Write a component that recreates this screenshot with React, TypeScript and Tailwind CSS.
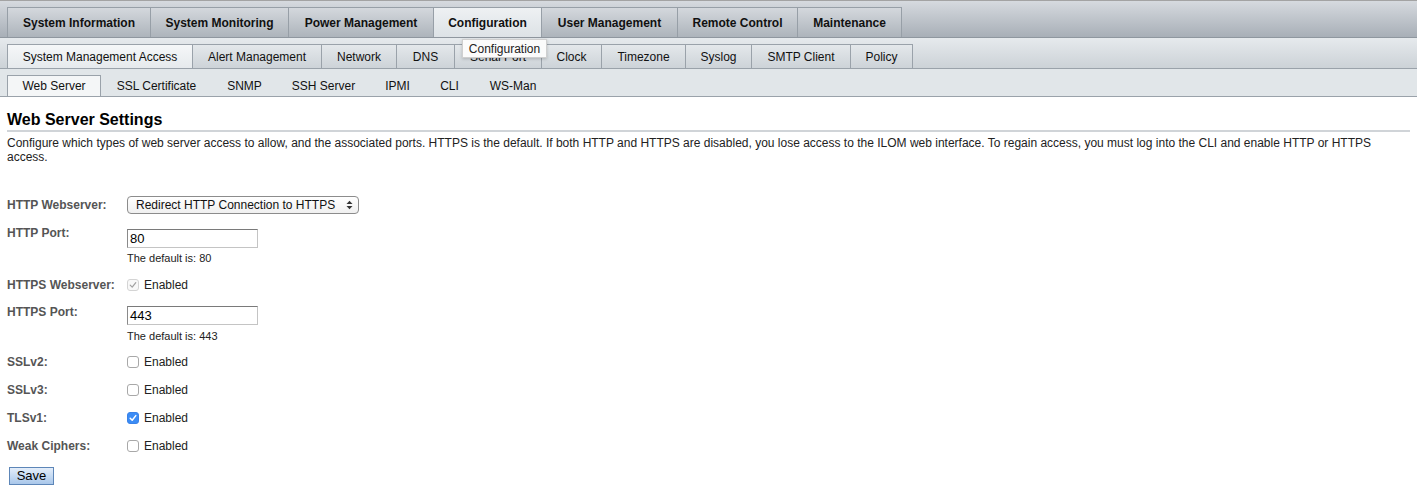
const topTabs = [
  { label: "System Information", w: "w-[144px]" },
  { label: "System Monitoring", w: "w-[138px]" },
  { label: "Power Management", w: "w-[145px]" },
  { label: "Configuration", w: "w-[108px]", active: true },
  { label: "User Management", w: "w-[136px]" },
  { label: "Remote Control", w: "w-[120px]" },
  { label: "Maintenance", w: "w-[104px]" },
];

const subTabs = [
  { label: "System Management Access", w: "w-[186px]", active: true },
  { label: "Alert Management", w: "w-[129px]" },
  { label: "Network", w: "w-[75px]" },
  { label: "DNS", w: "w-[58px]" },
  { label: "Serial Port", w: "w-[87px]" },
  { label: "Clock", w: "w-[60px]" },
  { label: "Timezone", w: "w-[84px]" },
  { label: "Syslog", w: "w-[66px]" },
  { label: "SMTP Client", w: "w-[99px]" },
  { label: "Policy", w: "w-[62px]" },
];

const thirdTabs = [
  { label: "Web Server", w: "w-[94px]", active: true },
  { label: "SSL Certificate", w: "w-[111px]" },
  { label: "SNMP", w: "w-[65px]" },
  { label: "SSH Server", w: "w-[93px]" },
  { label: "IPMI", w: "w-[55px]" },
  { label: "CLI", w: "w-[49px]" },
  { label: "WS-Man", w: "w-[78px]" },
];

function Checkbox({ checked, disabled }: { checked?: boolean; disabled?: boolean }) {
  if (checked && !disabled) {
    return (
      <span className="flex h-[12px] w-[12px] items-center justify-center rounded-[3px] border border-[#3a82e8] bg-[#3b8cf5]">
        <svg width="8" height="8" viewBox="0 0 8 8">
          <path d="M1.2 4.2 L3.2 6.2 L6.8 1.6" fill="none" stroke="white" strokeWidth="1.5" strokeLinecap="round" strokeLinejoin="round" />
        </svg>
      </span>
    );
  }
  return (
    <span
      className={
        disabled
          ? "flex h-[12px] w-[12px] items-center justify-center rounded-[3px] border border-[#d4d4d4] bg-[#f8f8f8]"
          : "flex h-[12px] w-[12px] items-center justify-center rounded-[3px] border border-[#a8a8a8] bg-white"
      }
    >
      {checked && (
        <svg width="8" height="8" viewBox="0 0 8 8">
          <path d="M1.2 4.2 L3.2 6.2 L6.8 1.6" fill="none" stroke="#a0a0a0" strokeWidth="1.2" strokeLinecap="round" strokeLinejoin="round" />
        </svg>
      )}
    </span>
  );
}

function CheckRow({ label, checked, disabled, mt }: { label: string; checked?: boolean; disabled?: boolean; mt: string }) {
  return (
    <div className={`flex h-[14px] items-center ${mt}`}>
      <div className="w-[120px] text-[12px] font-bold text-[#555]">{label}</div>
      <Checkbox checked={checked} disabled={disabled} />
      <span className="ml-[5px] text-[12px] text-[#222]">Enabled</span>
    </div>
  );
}

function PortRow({
  label,
  value,
  hint,
  mt,
  inputMt,
  hintMt,
}: {
  label: string;
  value: string;
  hint: string;
  mt: string;
  inputMt: string;
  hintMt: string;
}) {
  return (
    <div className={`flex ${mt}`}>
      <div className="w-[120px] text-[12px] leading-[14px] font-bold text-[#555]">{label}</div>
      <div className="flex flex-col">
        <div className={`${inputMt} flex h-[19px] w-[131px] items-center border border-t-[#7a7a7a] border-l-[#8a8a8a] border-r-[#c4c4c4] border-b-[#c4c4c4] bg-white px-[2px] text-[13px] text-black`}>
          {value}
        </div>
        <div className={`${hintMt} text-[11px] leading-[13px] text-[#222]`}>{hint}</div>
      </div>
    </div>
  );
}

export default function App() {
  return (
    <div className="relative min-h-[501px] w-full bg-white font-['Liberation_Sans',Arial,sans-serif]">
      {/* main tabs */}
      <div className="flex h-[38px] items-end border-t border-b border-t-[#a3a3a3] border-b-[#8f979f] bg-gradient-to-b from-[#d6dadf] to-[#a8afb7] pl-[7px]">
        {topTabs.map((t, i) => (
          <div
            key={t.label}
            className={`${t.w} ${i === 0 ? "border-l" : ""} flex h-[30px] shrink-0 items-center justify-center border-t border-r border-[#979fa7] text-[12px] font-bold text-[#111] ${
              t.active ? "bg-gradient-to-b from-[#eef1f3] to-[#dde2e6]" : "bg-gradient-to-b from-[#d4d8dd] to-[#adb4bb]"
            }`}
          >
            {t.label}
          </div>
        ))}
      </div>

      {/* second tabs */}
      <div className="flex h-[31px] items-end border-b border-[#9aa2aa] bg-gradient-to-b from-[#e6eaed] to-[#ccd2d7] pl-[7px]">
        {subTabs.map((t, i) => (
          <div
            key={t.label}
            className={`${t.w} ${i === 0 ? "border-l" : ""} flex h-[24px] shrink-0 items-center justify-center border-t border-r border-[#9aa2aa] text-[12px] text-[#111] ${
              t.active ? "bg-gradient-to-b from-[#f5f7f8] to-[#e6eaed]" : "bg-gradient-to-b from-[#e4e8eb] to-[#cdd3d8]"
            }`}
          >
            {t.label}
          </div>
        ))}
      </div>

      {/* third tabs */}
      <div className="flex h-[28px] items-end border-b border-[#9aa2aa] bg-[#e1e6e9] pl-[7px]">
        {thirdTabs.map((t) => (
          <div
            key={t.label}
            className={`${t.w} flex h-[21px] shrink-0 items-center justify-center text-[12px] text-[#111] ${
              t.active ? "border-t border-l border-r border-[#9aa2aa] bg-[#f4f6f7]" : ""
            }`}
          >
            {t.label}
          </div>
        ))}
      </div>

      {/* tooltip */}
      <div className="absolute top-[39px] left-[462px] flex h-[19px] w-[85px] items-center justify-center border border-[#cfcfcf] bg-[#fbfbfb] text-[12px] text-[#222] shadow-[0_1px_3px_rgba(0,0,0,0.2)]">
        Configuration
      </div>

      {/* content */}
      <div className="px-[7px]">
        <h1 className="mt-[13px] border-b-2 border-[#d0d4d8] text-[16px] leading-[20px] font-bold text-black">
          Web Server Settings
        </h1>
        <p className="mt-[4px] text-[12px] leading-[14px] text-[#222]">
          Configure which types of web server access to allow, and the associated ports. HTTPS is the default. If both HTTP and HTTPS are disabled, you lose access to the ILOM web interface. To regain access, you must log into the CLI and enable HTTP or HTTPS access.
        </p>

        <div className="mt-[32px] flex h-[18px] items-center">
          <div className="w-[120px] text-[12px] font-bold text-[#555]">HTTP Webserver:</div>
          <div className="flex h-[18px] w-[232px] items-center justify-between rounded-[4px] border border-[#8c8c8c] bg-gradient-to-b from-[#ffffff] to-[#f0f0f0] pr-[5px] pl-[8px] text-[12px] text-[#111]">
            <span>Redirect HTTP Connection to HTTPS</span>
            <svg width="7" height="10" viewBox="0 0 7 10">
              <path d="M0.5 4 L3.5 0.8 L6.5 4 Z" fill="#333" />
              <path d="M0.5 6 L3.5 9.2 L6.5 6 Z" fill="#333" />
            </svg>
          </div>
        </div>

        <PortRow label="HTTP Port:" value="80" hint="The default is: 80" mt="mt-[12px]" inputMt="mt-[3px]" hintMt="mt-[4px]" />
        <CheckRow label="HTTPS Webserver:" checked disabled mt="mt-[13px]" />
        <PortRow label="HTTPS Port:" value="443" hint="The default is: 443" mt="mt-[13px]" inputMt="mt-[1px]" hintMt="mt-[5px]" />
        <CheckRow label="SSLv2:" mt="mt-[12px]" />
        <CheckRow label="SSLv3:" mt="mt-[14px]" />
        <CheckRow label="TLSv1:" checked mt="mt-[14px]" />
        <CheckRow label="Weak Ciphers:" mt="mt-[14px]" />

        <button className="mt-[14px] ml-[2px] flex h-[18px] w-[45px] items-center justify-center border border-[#5d86b8] bg-gradient-to-b from-[#e4eefa] to-[#a9c7ea] text-[13px] text-black">
          Save
        </button>
      </div>
    </div>
  );
}
